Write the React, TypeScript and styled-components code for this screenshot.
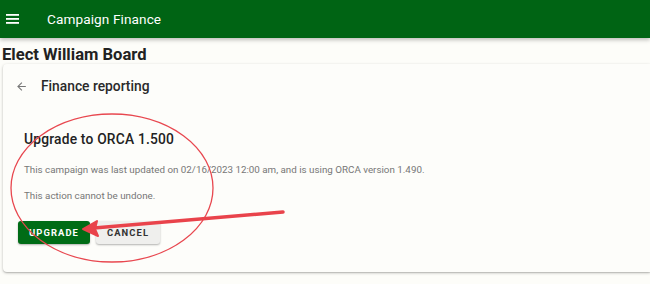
import React from "react";
import styled, { createGlobalStyle } from "styled-components";

const Global = createGlobalStyle`
  html, body { margin: 0; padding: 0; background: #fdfdf9; }
  body { font-family: Roboto, "Liberation Sans", sans-serif; width: 650px; height: 284px; overflow: hidden; }
`;

const Page = styled.div`
  position: relative;
  width: 650px;
  height: 284px;
  overflow: hidden;
`;

const AppBar = styled.header`
  height: 38px;
  background: #006414;
  color: #fff;
  display: flex;
  align-items: center;
  box-shadow: 0 2px 4px rgba(0,0,0,0.25);
  position: relative;
  z-index: 1;
`;

const MenuButton = styled.div`
  width: 47px;
  display: flex;
  align-items: center;
  padding-left: 6px;
  box-sizing: border-box;
`;

const AppTitle = styled.div`
  font-size: 13.6px;
  font-weight: 400;
  letter-spacing: 0.1px;
`;

const Main = styled.main`
  padding: 7px 0 0 3px;
`;

const PageTitle = styled.h1`
  margin: 0 0 0 -1px;
  font-size: 16.6px;
  font-weight: 700;
  color: #222;
  line-height: 19px;
`;

const Card = styled.section`
  background: #fdfdfa;
  border-radius: 4px 0 0 4px;
  box-shadow: 0 1px 3px rgba(0,0,0,0.25), 0 1px 1px rgba(0,0,0,0.1);
  height: 208px;
  box-sizing: border-box;
  padding: 13px 0 0 0;
`;

const CardHeader = styled.div`
  display: flex;
  align-items: center;
  height: 18px;
  padding-left: 12px;
`;

const BackIcon = styled.div`
  width: 26px;
  display: flex;
  align-items: center;
`;

const CardTitle = styled.div`
  font-size: 13.8px;
  color: #2a2a2a;
  font-weight: 500;
`;

const Body = styled.div`
  padding: 36px 0 0 21px;
`;

const Heading = styled.h2`
  margin: 0;
  font-size: 13.8px;
  font-weight: 500;
  color: #222;
  line-height: 16px;
  letter-spacing: 0.2px;
`;

const Text = styled.p<{ $top: number }>`
  margin: ${(p) => p.$top}px 0 0 0;
  font-size: 9.8px;
  color: #777;
  line-height: 12px;
`;

const Actions = styled.div`
  display: flex;
  gap: 6px;
  margin: 19px 0 0 -6px;
`;

const Button = styled.button<{ $primary?: boolean }>`
  height: 23px;
  border: none;
  border-radius: 3px;
  padding: 0;
  font-family: Roboto, "Liberation Sans", sans-serif;
  font-size: 9.4px;
  font-weight: 700;
  letter-spacing: 1.1px;
  background: ${(p) => (p.$primary ? "#006c16" : "#efefed")};
  color: ${(p) => (p.$primary ? "#fff" : "#333")};
  box-shadow: 0 1px 2px rgba(0,0,0,0.3);
  width: ${(p) => (p.$primary ? "72px" : "64px")};
`;

const Overlay = styled.svg`
  position: absolute;
  left: 0;
  top: 0;
  pointer-events: none;
`;

export default function App() {
  return (
    <Page>
      <Global />
      <AppBar>
        <MenuButton>
          <svg width="14" height="10" viewBox="0 0 14 10">
            <rect x="0" y="0" width="13" height="1.8" fill="#fff" />
            <rect x="0" y="4" width="13" height="1.8" fill="#fff" />
            <rect x="0" y="8" width="13" height="1.8" fill="#fff" />
          </svg>
        </MenuButton>
        <AppTitle>Campaign Finance</AppTitle>
      </AppBar>
      <Main>
        <PageTitle>Elect William Board</PageTitle>
        <Card>
          <CardHeader>
            <BackIcon>
              <svg width="13" height="13" viewBox="0 0 24 24">
                <path d="M20 11H7.83l5.59-5.59L12 4l-8 8 8 8 1.41-1.41L7.83 13H20v-2z" fill="#777" />
              </svg>
            </BackIcon>
            <CardTitle>Finance reporting</CardTitle>
          </CardHeader>
          <Body>
            <Heading>Upgrade to ORCA 1.500</Heading>
            <Text $top={17}>
              This campaign was last updated on 02/16/2023 12:00 am, and is using ORCA version 1.490.
            </Text>
            <Text $top={14}>This action cannot be undone.</Text>
            <Actions>
              <Button $primary>UPGRADE</Button>
              <Button>CANCEL</Button>
            </Actions>
          </Body>
        </Card>
      </Main>
      <Overlay width="650" height="284" viewBox="0 0 650 284">
        <ellipse cx="112" cy="188" rx="101" ry="74" fill="none" stroke="#e8474f" strokeWidth="1.3" />
        <line x1="283" y1="212" x2="94" y2="228" stroke="#e9434b" strokeWidth="3.5" strokeLinecap="round" />
        <path d="M83 229 L97 221 L95 229 L98 236 Z" fill="#e9434b" stroke="#e9434b" strokeWidth="2" strokeLinejoin="round" />
      </Overlay>
    </Page>
  );
}
